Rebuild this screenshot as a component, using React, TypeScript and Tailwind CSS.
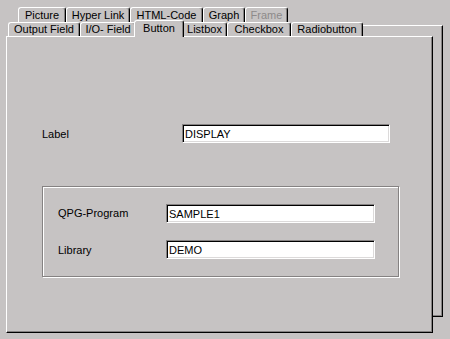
const font = "font-['Liberation_Sans',Arial,sans-serif]";

type TabProps = {
  label: string;
  width: string;
  disabled?: boolean;
};

const BackTab = ({ label, width, disabled }: TabProps) => (
  <div
    className={`${width} h-[15px] flex items-center justify-center rounded-t-[3px] border-t border-l border-r border-t-white border-l-white border-r-black shadow-[inset_-1px_0_0_#858282] bg-[#c6c3c3] text-[11px] leading-none ${
      disabled ? "text-[#8d8a8a]" : "text-black"
    }`}
  >
    {label}
  </div>
);

const FrontTab = ({ label, width }: TabProps) => (
  <div
    className={`${width} h-[14px] flex items-center justify-center rounded-t-[3px] border-t border-l border-r border-t-white border-l-white border-r-black shadow-[inset_-1px_0_0_#858282] bg-[#c6c3c3] text-[11px] leading-none text-black`}
  >
    {label}
  </div>
);

const Field = ({ value, width }: { value: string; width: string }) => (
  <div
    className={`${width} h-[19px] flex items-center bg-white border border-t-[#858282] border-l-[#858282] border-b-white border-r-white shadow-[inset_1px_1px_0_#000,inset_-1px_-1px_0_#dcdada] pl-[2px] pt-[1px] text-[11px] leading-none text-black`}
  >
    {value}
  </div>
);

export default function App() {
  return (
    <div className={`relative w-[450px] h-[339px] overflow-hidden bg-[#c6c3c3] pt-[7px] ${font}`}>
      {/* sheet lying behind the active page */}
      <div className="absolute left-[16px] top-[25px] w-[427px] h-[292px] border-t border-t-white border-r border-r-black border-b border-b-black shadow-[inset_-1px_-1px_0_#858282]" />

      <div className="relative">
        <div className="flex ml-[18px]">
          <BackTab label="Picture" width="w-[48px]" />
          <BackTab label="Hyper Link" width="w-[64px]" />
          <BackTab label="HTML-Code" width="w-[73px]" />
          <BackTab label="Graph" width="w-[42px]" />
          <BackTab label="Frame" width="w-[43px]" disabled />
        </div>

        <div className="flex items-end h-[14px] ml-[8px]">
          <FrontTab label="Output Field" width="w-[72px]" />
          <FrontTab label="I/O- Field" width="w-[56px]" />
          <div className="relative z-10 w-[50px] h-[17px] -mx-[2px] -mb-[1px] flex items-center justify-center rounded-t-[3px] border-t border-l border-r border-t-white border-l-white border-r-black shadow-[inset_-1px_0_0_#858282] bg-[#c6c3c3] text-[11px] leading-none text-black pb-[1px]">
            Button
          </div>
          <FrontTab label="Listbox" width="w-[45px]" />
          <FrontTab label="Checkbox" width="w-[64px]" />
          <FrontTab label="Radiobutton" width="w-[72px]" />
        </div>

        <div className="ml-[6px] w-[427px] h-[297px] bg-[#c6c3c3] border-t border-l border-t-white border-l-white border-r border-b border-r-black border-b-black shadow-[inset_-1px_-1px_0_#858282] pt-[87px] pl-[35px] text-[11px] text-black">
          <div className="flex items-center">
            <span className="w-[140px] leading-none pt-[2px]">Label</span>
            <Field value="DISPLAY" width="w-[208px]" />
          </div>

          <div className="mt-[43px] w-[357px] h-[91px] border border-[#858282] shadow-[inset_1px_1px_0_#fff,1px_1px_0_#fff] pt-[17px] pl-[15px] flex flex-col gap-[17px]">
            <div className="flex items-center">
              <span className="w-[108px] leading-none">QPG-Program</span>
              <Field value="SAMPLE1" width="w-[209px]" />
            </div>
            <div className="flex items-center">
              <span className="w-[108px] leading-none pt-[2px]">Library</span>
              <Field value="DEMO" width="w-[209px]" />
            </div>
          </div>
        </div>
      </div>
    </div>
  );
}
